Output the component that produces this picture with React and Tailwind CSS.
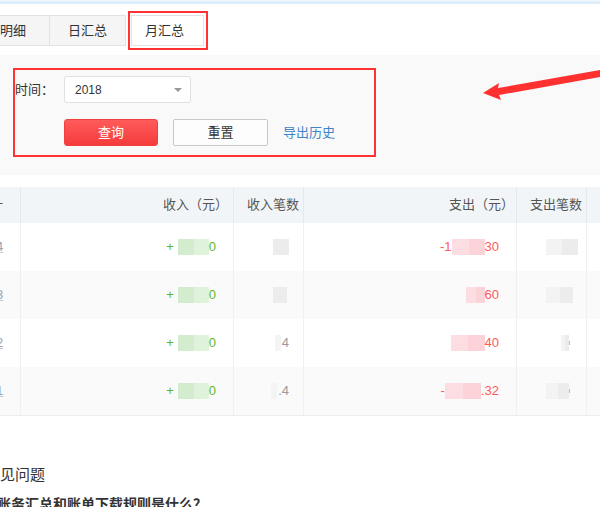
import React from "react";

const grid = "grid grid-cols-[21px_213px_70px_213px_70px_1fr]";

function Blur({ w, tone = "green", split }) {
  const c =
    tone === "green"
      ? ["bg-[#d3ecce]", "bg-[#e0f2dc]"]
      : tone === "red"
      ? ["bg-[#fcdde1]", "bg-[#fbd3d9]"]
      : ["bg-[#f3f3f3]", "bg-[#ececec]"];
  const a = split ?? Math.round(w / 2);
  return (
    <span className="inline-flex h-[16px]">
      <span className={`h-full ${c[0]}`} style={{ width: a }} />
      <span className={`h-full ${c[1]}`} style={{ width: w - a }} />
    </span>
  );
}

const rows = [
  {
    bg: "bg-white",
    m: "4",
    inc: { pre: "+", w: 31, post: "0" },
    incCnt: { w: 16, post: "" },
    exp: { pre: "-1", w: 33, post: "30" },
    expCnt: { w: 32, post: "" },
  },
  {
    bg: "bg-[#fafafa]",
    m: "3",
    inc: { pre: "+", w: 31, post: "0" },
    incCnt: { w: 14, post: "", pr: "pr-[16px]" },
    exp: { pre: "", w: 19, post: "60" },
    expCnt: { w: 27, post: "", pr: "pr-[13px]" },
  },
  {
    bg: "bg-white",
    m: "2",
    inc: { pre: "+", w: 31, post: "0" },
    incCnt: { w: 6, post: "4", light: true },
    exp: { pre: "", w: 34, post: "40" },
    expCnt: { w: 8, post: "", dot: true, pr: "pr-[16px]" },
  },
  {
    bg: "bg-[#fafafa]",
    m: "1",
    inc: { pre: "+", w: 31, post: "0" },
    incCnt: { w: 6, post: ".4", light: true },
    exp: { pre: "-", w: 36, post: ".32" },
    expCnt: { w: 23, post: "", dot: true, pr: "pr-[16px]" },
  },
];

export default function App() {
  return (
    <div
      className="relative w-[600px] h-[507px] overflow-hidden bg-white text-[#333]"
      style={{ fontFamily: '"Liberation Sans", "Noto Sans CJK SC", sans-serif' }}
    >
      {/* top line */}
      <div className="h-[1px] bg-[#f2f9fe]" />
      <div className="h-[3px] bg-[#dfeefb]" />

      {/* tabs */}
      <div className="mt-[11px] flex h-[31px] text-[13px] text-[#333]">
        <div className="w-[50px] flex items-center border-y border-r border-[#e2e2e2] bg-[#f5f5f5]">
          明细
        </div>
        <div className="w-[76px] flex items-center justify-center border-y border-r border-[#e2e2e2] bg-[#f5f5f5]">
          日汇总
        </div>
        <div className="ml-[5px] w-[73px] flex items-center justify-center border border-[#e2e2e2] bg-white">
          <span className="-ml-[6px]">月汇总</span>
        </div>
      </div>

      {/* filter panel */}
      <div className="mt-[9px] h-[120px] bg-[#f9f9f9] pt-[21px]">
        <div className="flex items-center">
          <span className="pl-[15px] w-[64px] text-[13px]">时间：</span>
          <div className="w-[127px] h-[27px] rounded-[3px] border border-[#e0e0e0] bg-white flex items-center justify-between pl-[10px] pr-[8px]">
            <span className="text-[12px] text-[#333]">2018</span>
            <span className="w-0 h-0 border-l-[4px] border-r-[4px] border-t-[4px] border-l-transparent border-r-transparent border-t-[#999]" />
          </div>
        </div>
        <div className="mt-[16px] pl-[64px] flex items-center">
          <button className="w-[94px] h-[27px] rounded-[3px] bg-gradient-to-b from-[#ff5a5a] to-[#f53b3b] text-white text-[13px] border border-[#f04040]">
            查询
          </button>
          <button className="ml-[15px] w-[95px] h-[27px] rounded-[2px] bg-[#fdfdfd] border border-[#c8c8c8] text-[#333] text-[13px]">
            重置
          </button>
          <span className="ml-[15px] text-[13px] text-[#3d85c6]">导出历史</span>
        </div>
      </div>

      {/* table */}
      <div className="mt-[12px] text-[13px]">
        <div className={`${grid} h-[36px] bg-[#f2f5f8] text-[#555]`}>
          <div className="border-r border-[#e5e9ee] overflow-hidden flex items-center">
            <span className="-ml-[10px]">计</span>
          </div>
          <div className="border-r border-[#e5e9ee] flex items-center justify-end pr-[5px]">收入（元）</div>
          <div className="border-r border-[#e5e9ee] flex items-center justify-end pr-[4px]">收入笔数</div>
          <div className="border-r border-[#e5e9ee] flex items-center justify-end pr-[2px]">支出（元）</div>
          <div className="border-r border-[#e5e9ee] flex items-center justify-end pr-[4px]">支出笔数</div>
          <div />
        </div>
        {rows.map((r, i) => (
          <div key={i} className={`${grid} h-[48px] ${r.bg}`}>
            <div className="border-r border-[#f0f0f0] overflow-hidden flex items-center text-[#9aa3ad]">
              <span className="-ml-[4px] underline decoration-[#c0c6cc]">{r.m}</span>
            </div>
            <div className="border-r border-[#f0f0f0] flex items-center justify-end pr-[17px] text-[#5cb82e]">
              <span className="mr-[4px]">{r.inc.pre}</span>
              <Blur w={r.inc.w} tone="green" split={16} />
              <span>{r.inc.post}</span>
            </div>
            <div
              className={`border-r border-[#f0f0f0] flex items-center justify-end ${
                r.incCnt.pr ?? "pr-[14px]"
              } text-[#999]`}
            >
              <span className={`inline-block h-[16px] ${r.incCnt.light ? "bg-[#f4f4f4]" : "bg-[#ececec]"}`} style={{ width: r.incCnt.w }} />
              {r.incCnt.post && <span className="ml-[1px]">{r.incCnt.post}</span>}
            </div>
            <div className="border-r border-[#f0f0f0] flex items-center justify-end pr-[17px] text-[#ff5a5a]">
              {r.exp.pre && <span>{r.exp.pre}</span>}
              <Blur w={r.exp.w} tone="red" />
              <span>{r.exp.post}</span>
            </div>
            <div
              className={`border-r border-[#f0f0f0] flex items-center justify-end ${
                r.expCnt.pr ?? "pr-[8px]"
              }`}
            >
              <Blur w={r.expCnt.w} tone="gray" />
              {r.expCnt.dot && <span className="w-[1px] h-[4px] bg-[#9cc6ea]" />}
            </div>
            <div />
          </div>
        ))}
        <div className="h-[1px] bg-[#ececec]" />
      </div>

      {/* FAQ */}
      <div className="mt-[49px] -ml-[15px] text-[15px] leading-[20px] text-[#333]">常见问题</div>
      <div className="mt-[9px] -ml-[3px] text-[14px] leading-[20px] font-bold text-[#333]">
        账务汇总和账单下载规则是什么？
      </div>

      {/* annotations */}
      <div className="absolute left-[128px] top-[11px] w-[80px] h-[39px] border-2 border-[#ff3333]" />
      <div className="absolute left-[13px] top-[68px] w-[363px] h-[89px] border-2 border-[#ff3333]" />
      <svg className="absolute left-0 top-0" width="600" height="507" viewBox="0 0 600 507">
        <polygon
          points="483,93 499,83 498,88 600,70 600,77 499,95 501,100"
          fill="#ff3030"
        />
      </svg>
    </div>
  );
}
